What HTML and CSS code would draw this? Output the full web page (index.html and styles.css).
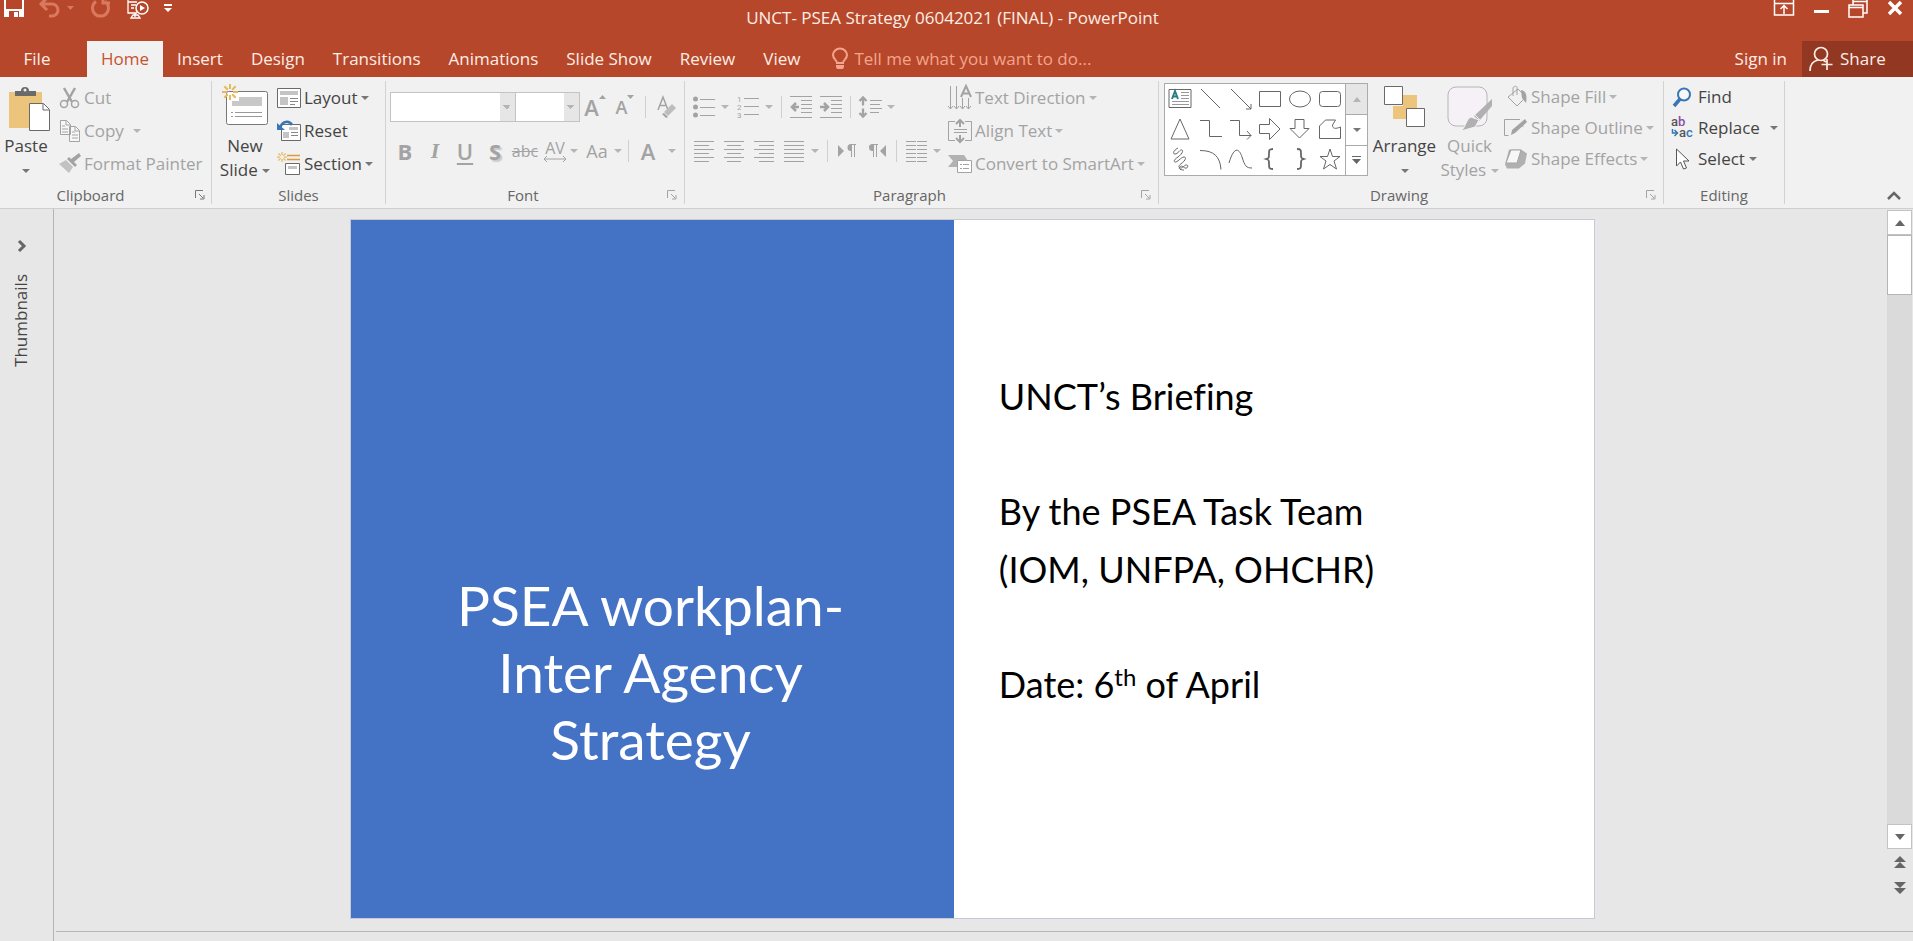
FILE: index.html
```html
<!DOCTYPE html>
<html lang="en">
<head>
<meta charset="utf-8">
<title>UNCT- PSEA Strategy 06042021 (FINAL) - PowerPoint</title>
<link rel="stylesheet" href="styles.css">
</head>
<body>
<svg class="defs" aria-hidden="true">
  <symbol id="launch" viewBox="0 0 10 10"><path d="M.5 8V.5H8M4 4l4 4M9 5v4H5" fill="none" stroke="currentColor"/></symbol>
  <symbol id="star8" viewBox="0 0 16 16"><path d="M8 0v5M8 11v5M0 8h5M11 8h5M2.300 2.300l3.500 3.500M10.200 10.200l3.500 3.500M13.700 2.300l-3.500 3.500M5.800 10.200l-3.500 3.500" stroke="#e8b95c" stroke-width="2" fill="none"/></symbol>
</svg>
<header class="chrome">
  <div class="titlebar">
    <div class="quick">
      <button aria-label="Save"><svg width="20" height="18" viewBox="0 0 20 18"><path d="M1 0v16h18V0" fill="none" stroke="#fff" stroke-width="2"/><path d="M0 9h20v8H0z" fill="#fff"/><path d="M5 11h10v6H5z" fill="#b7472a"/><path d="M10 12h4v5h-4z" fill="#fff"/><path d="M4 0h12v7H4z" fill="#b7472a"/></svg></button>
      <button aria-label="Undo" class="faded wide"><svg width="36" height="18" viewBox="0 0 36 18"><path d="M8-2L2 4l6 6M2 4h11a6 6 0 0 1 0 12h-3" fill="none" stroke="currentColor" stroke-width="3"/><path d="M28 6h7l-3.500 4z" fill="currentColor"/></svg></button>
      <button aria-label="Redo" class="faded"><svg width="22" height="18" viewBox="0 0 22 18"><path d="M6 1.500a8 8 0 1 0 9 0M13-3v6h7" fill="none" stroke="currentColor" stroke-width="3"/></svg></button>
      <button aria-label="Start from beginning"><svg width="22" height="20" viewBox="0 0 22 20"><path d="M1 0v13h9M1 2h9M4 5h5M4 8h3M8 13v4M4 18h9l-2-3H6z" fill="none" stroke="#fff" stroke-width="1.300"/><circle cx="15" cy="8" r="6" fill="#b7472a" stroke="#fff" stroke-width="1.500"/><path d="M13 5l5 3-5 3z" fill="#fff"/></svg></button>
      <button aria-label="Customize toolbar" class="narrow"><svg width="8" height="8" viewBox="0 0 8 8"><path d="M0 0h8v2H0zM0 4h8L4 8z" fill="#fff"/></svg></button>
    </div>
    <h1 class="doc-title">UNCT- PSEA Strategy 06042021 (FINAL) - PowerPoint</h1>
    <div class="window-controls">
      <button aria-label="Ribbon display options"><svg width="20" height="16" viewBox="0 0 20 16"><path d="M.5 0v15h19V0M0 3.500h20M10 14V6M6.500 9L10 5.500 13.500 9" fill="none" stroke="#fff" stroke-width="1.500"/></svg></button>
      <button aria-label="Minimize"><svg width="16" height="16" viewBox="0 0 16 16"><path d="M1 10h15v3H1z" fill="#fff"/></svg></button>
      <button aria-label="Restore"><svg width="20" height="18" viewBox="0 0 20 18"><path d="M5 5V0M19 0v13h-4M5 1.500h14" fill="none" stroke="#fff" stroke-width="1.500"/><path d="M1 5h14v12H1zM1 7.500h14" fill="none" stroke="#fff" stroke-width="1.500"/></svg></button>
      <button aria-label="Close"><svg width="16" height="16" viewBox="0 0 16 16"><path d="M2 2l12 12M14 2L2 14" stroke="#fff" stroke-width="3.500"/></svg></button>
    </div>
  </div>
  <div class="tabbar">
    <nav class="tabs" aria-label="Ribbon tabs">
      <button class="tab file">File</button>
      <button class="tab active">Home</button>
      <button class="tab">Insert</button>
      <button class="tab">Design</button>
      <button class="tab">Transitions</button>
      <button class="tab">Animations</button>
      <button class="tab">Slide Show</button>
      <button class="tab">Review</button>
      <button class="tab">View</button>
    </nav>
    <label class="tell">
      <svg width="16" height="22" viewBox="0 0 16 22"><path d="M5 15c0-3-4-4-4-8a7 6.500 0 0 1 14 0c0 4-4 5-4 8z" fill="none" stroke="currentColor" stroke-width="2"/><path d="M4 17h8v2l-1 2H5l-1-2z" fill="currentColor"/></svg>
      <input type="text" aria-label="Tell me what you want to do" placeholder="Tell me what you want to do...">
    </label>
    <a class="signin" href="#">Sign in</a>
    <button class="share"><svg width="24" height="26" viewBox="0 0 24 26"><circle cx="12" cy="8" r="6.500"/><path d="M1 25c0-6 3-10 8-11M14 14l3 2M18 13v11M12.500 18.500h11"/></svg>Share</button>
  </div>
</header>

<section class="ribbon" aria-label="Home">
  <div class="group clipboard">
    <div class="content">
      <button class="big paste"><span class="art"><svg width="42" height="46" viewBox="0 0 42 46"><path d="M1 6h33v36H1z" fill="#ecc47c"/><path d="M7 10V5h6a4 4 0 0 1 8 0h7v5z" fill="#6a6a6a"/><circle cx="17" cy="4" r="1.500" fill="#f0f0f0"/><path d="M21.500 17.500h14l6 6v21h-20z" fill="#fff" stroke="#6a6a6a"/><path d="M35 18v6h6" fill="none" stroke="#6a6a6a"/></svg></span><span class="line">Paste</span><span class="line"><i class="caret"></i></span></button>
      <div class="stack">
        <button class="row off"><svg width="22" height="22" viewBox="0 0 22 22" fill="none" stroke="currentColor"><path d="M5 1l8 14M16 1L8 15" stroke-width="2.500"/><circle cx="5" cy="17" r="3.500" stroke-width="1.500"/><circle cx="16" cy="17" r="3.500" stroke-width="1.500"/></svg>Cut</button>
        <button class="row off"><svg width="22" height="22" viewBox="0 0 22 22" fill="#f7f7f7" stroke="currentColor"><path d="M1.500.5h6l4 4v10h-10zM10.500 6.500h6l4 4v11h-10z"/><path d="M16 7v4h4M7 1v4h4M3 6h3M3 9h6M3 12h6M13 12h3M13 15h6M13 18h6"/></svg>Copy<i class="caret far"></i></button>
        <button class="row off"><svg width="22" height="22" viewBox="0 0 22 22" fill="currentColor"><path d="M20 0l2 3-7 6-3-3zM10 4l8 8-2 2-8-8z"/><path d="M7 7l7 7-4 6L0 11z" opacity=".6"/></svg>Format Painter</button>
      </div>
    </div>
    <footer><span>Clipboard</span><button class="launch" aria-label="Clipboard settings"><svg width="10" height="10"><use href="#launch"/></svg></button></footer>
  </div>

  <div class="group slides">
    <div class="content">
      <button class="big"><span class="art"><svg width="48" height="42" viewBox="0 0 48 42"><rect x="5.500" y="7.500" width="41" height="33" rx="2" fill="#fff" stroke="#777"/><path d="M11 13h30v9H11z" fill="#c8c8c8"/><path d="M10 28.500h2M14 28.500h27M10 32.500h2M14 32.500h27" stroke="#999"/><path d="M11 13h7v4h-7z" fill="#fff"/><use href="#star8" x="1" y="0" width="16" height="16"/></svg></span><span class="line">New</span><span class="line">Slide <i class="caret"></i></span></button>
      <div class="stack">
        <button class="row"><svg width="24" height="20" viewBox="0 0 24 20"><path d="M.5.5h23v19H.5z" fill="#fff" stroke="#6a6a6a"/><path d="M3 3h18v4H3zM3 9h8v8H3z" fill="#c4c4c4"/><path d="M13 10.500h8M13 13.500h8M13 16.500h5" stroke="#888"/></svg>Layout<i class="caret"></i></button>
        <button class="row"><svg width="24" height="20" viewBox="0 0 24 20"><path d="M4.500 3.500h19v16h-19z" fill="#fff" stroke="#6a6a6a"/><path d="M12 6h9v3h-9zM6 11h6v6H6z" fill="#c4c4c4"/><path d="M14 11.500h7M14 14.500h7" stroke="#888"/><path d="M3 7C5 0 12-1 15 4" fill="none" stroke="#3a76b5" stroke-width="2.500"/><path d="M0 2v7h8z" fill="#3a76b5"/></svg>Reset</button>
        <button class="row"><svg width="24" height="24" viewBox="0 0 24 24"><use href="#star8" width="10" height="10"/><path d="M10 3.500h13M10 7.500h13" stroke="#dc9b3f" stroke-width="1.500"/><path d="M8.500 11.500h14v11h-14z" fill="#fff" stroke="#6a6a6a"/><path d="M11 14h9v3h-9z" fill="#c4c4c4"/></svg>Section<i class="caret"></i></button>
      </div>
    </div>
    <footer><span>Slides</span></footer>
  </div>

  <div class="group font">
    <div class="content tools">
      <div class="toolrow">
        <select class="combo family" aria-label="Font" disabled><option></option></select>
        <select class="combo size" aria-label="Font size" disabled><option></option></select>
        <button class="tool t22 semi" aria-label="Increase font size">A<svg class="mark" width="7" height="4"><path d="M0 4h7L3.500 0z" fill="currentColor"/></svg></button>
        <button class="tool t18 semi" aria-label="Decrease font size">A<svg class="mark" width="7" height="4"><path d="M0 0h7L3.500 4z" fill="currentColor"/></svg></button>
        <i class="sep wide"></i>
        <button class="tool" aria-label="Clear formatting"><svg width="20" height="22" viewBox="0 0 20 22"><path d="M1 14L6 1l5 13M3 9.500h6" fill="none" stroke="currentColor" stroke-width="1.500"/><path d="M15 8l4 4-8 8-4-4z" fill="#bdbdbd"/><path d="M7 17l4 4-2 1-4-4z" fill="currentColor"/></svg></button>
      </div>
      <div class="toolrow">
        <button class="tool t22 bold">B</button>
        <button class="tool t22 italic">I</button>
        <button class="tool t22 under">U</button>
        <button class="tool t22 bold shadow">S</button>
        <button class="tool t16 strike">abc</button>
        <button class="tool t16 spacing" aria-label="Character spacing"><span>AV</span><svg width="22" height="6" viewBox="0 0 22 6"><path d="M0 3h22M3 0L0 3l3 3M19 0l3 3-3 3" fill="none" stroke="currentColor"/></svg></button>
        <i class="caret"></i>
        <button class="tool t18 case">Aa</button>
        <i class="caret"></i>
        <i class="sep"></i>
        <button class="tool t22 semi">A</button>
        <i class="caret gap"></i>
      </div>
    </div>
    <footer><span>Font</span><button class="launch off" aria-label="Font settings"><svg width="10" height="10"><use href="#launch"/></svg></button></footer>
  </div>

  <div class="group paragraph">
    <div class="content">
      <div class="tools">
        <div class="toolrow">
          <button class="tool" aria-label="Bullets"><svg width="22" height="22" viewBox="0 0 22 22"><g fill="currentColor"><circle cx="2.500" cy="3" r="2.500"/><circle cx="2.500" cy="11" r="2.500"/><circle cx="2.500" cy="19" r="2.500"/></g><path d="M7 3.500h15M7 11.500h15M7 19.500h15" stroke="currentColor"/></svg></button><i class="caret"></i>
          <button class="tool" aria-label="Numbering"><svg width="22" height="24" viewBox="0 0 22 24" class="nums"><text x="0" y="7">1</text><text x="0" y="15">2</text><text x="0" y="23">3</text><path d="M7 3.500h15M7 11.500h15M7 19.500h15" stroke="currentColor"/></svg></button><i class="caret"></i>
          <i class="sep"></i>
          <button class="tool" aria-label="Decrease indent"><svg width="22" height="22" viewBox="0 0 22 22"><path d="M0 .5h22M11 4.500h11M11 8.500h11M11 12.500h11M11 16.500h11M0 21.500h22" stroke="currentColor"/><path d="M9 11H2M6 7l-4 4 4 4" fill="none" stroke="currentColor" stroke-width="2.500"/></svg></button>
          <button class="tool" aria-label="Increase indent"><svg width="22" height="22" viewBox="0 0 22 22"><path d="M0 .5h22M11 4.500h11M11 8.500h11M11 12.500h11M11 16.500h11M0 21.500h22" stroke="currentColor"/><path d="M0 11h7M4 7l4 4-4 4" fill="none" stroke="currentColor" stroke-width="2.500"/></svg></button>
          <i class="sep"></i>
          <button class="tool" aria-label="Line spacing"><svg width="23" height="22" viewBox="0 0 23 22"><path d="M4 1v20M.5 5L4 1.500 7.500 5M.5 17L4 20.500 7.500 17" fill="none" stroke="currentColor" stroke-width="2.300"/><path d="M1 11h6" stroke="#f0f0f0" stroke-width="3"/><path d="M11 4.500h12M11 8.500h10M11 12.500h12M11 16.500h9" stroke="currentColor"/></svg></button><i class="caret"></i>
        </div>
        <div class="toolrow">
          <button class="tool" aria-label="Align left"><svg width="20" height="21"><path d="M0 .5h20M0 4.500h15M0 8.500h20M0 12.500h15M0 16.500h20M0 20.500h15" stroke="currentColor"/></svg></button>
          <button class="tool" aria-label="Center"><svg width="20" height="21"><path d="M0 .5h20M3 4.500h14M0 8.500h20M3 12.500h14M0 16.500h20M3 20.500h14" stroke="currentColor"/></svg></button>
          <button class="tool" aria-label="Align right"><svg width="20" height="21"><path d="M0 .5h20M5 4.500h15M0 8.500h20M5 12.500h15M0 16.500h20M5 20.500h15" stroke="currentColor"/></svg></button>
          <button class="tool" aria-label="Justify"><svg width="20" height="21"><path d="M0 .5h20M0 4.500h20M0 8.500h20M0 12.500h20M0 16.500h20M0 20.500h20" stroke="currentColor"/></svg></button><i class="caret"></i>
          <i class="sep"></i>
          <button class="tool" aria-label="Left to right"><svg width="18" height="14" viewBox="0 0 18 14"><path d="M0 1l6 6-6 6zM12 0h6v1h-1v12h-1V1h-2v12h-1V7a3.500 3.500 0 0 1 0-7z" fill="currentColor"/></svg></button>
          <button class="tool" aria-label="Right to left"><svg width="18" height="14" viewBox="0 0 18 14"><path d="M18 1l-6 6 6 6zM4 0h6v1H9v12H8V1H6v12H5V7a3.500 3.500 0 0 1-1-7z" fill="currentColor"/></svg></button>
          <i class="sep"></i>
          <button class="tool" aria-label="Columns"><svg width="21" height="21"><path d="M0 .5h10M0 4.500h10M0 8.500h10M0 12.500h10M0 16.500h10M0 20.500h10M11 .5h10M11 4.500h10M11 8.500h10M11 12.500h10M11 16.500h10M11 20.500h10" stroke="currentColor"/></svg></button><i class="caret"></i>
        </div>
      </div>
      <div class="stack tight">
        <button class="row off"><svg width="24" height="24" viewBox="0 0 24 24" fill="none" stroke="currentColor"><path d="M2.500 0v23M8.500 0v23M14.500 12v11M20.500 12v11M0 20l2.500 3L5 20M6 20l2.500 3 2.500-3M12 20l2.500 3 2.500-3M18 20l2.500 3 2.500-3"/><path d="M13 11l5-11 5 11M15 7.500h6" stroke-width="2"/></svg>Text Direction<i class="caret"></i></button>
        <button class="row off"><svg width="24" height="24" viewBox="0 0 24 24" fill="none" stroke="currentColor"><path d="M7 2.500H.5v19H7M17 2.500h6.500v19H17M6 10.500h13M6 13.500h13"/><path d="M12 1v7M12 23v-7M8 5l4-4 4 4M8 19l4 4 4-4" stroke-width="2"/></svg>Align Text<i class="caret"></i></button>
        <button class="row off"><svg width="24" height="20" viewBox="0 0 24 20"><path d="M0 1h16l4 6h-8v6H0l5-6z" fill="currentColor" opacity=".8"/><path d="M9.500 6.500h14v12h-14z" fill="#fff" stroke="currentColor"/><path d="M12 10.500h2M15 10.500h6M12 14.500h2M15 14.500h6" stroke="currentColor"/></svg>Convert to SmartArt<i class="caret"></i></button>
      </div>
    </div>
    <footer><span>Paragraph</span><button class="launch off" aria-label="Paragraph settings"><svg width="10" height="10"><use href="#launch"/></svg></button></footer>
  </div>

  <div class="group drawing">
    <div class="content">
      <div class="gallery">
        <div class="shapes">
          <button aria-label="Text box"><svg viewBox="0 0 24 24"><path d="M1 2.500h22v18H1z"/><path d="M13 5.500h8M13 8.500h8M13 11.500h8M4 14.500h17M4 17.500h17" stroke="#999"/><path d="M4 12l3-8 3 8M5 9.500h4" stroke="#2a7f86" stroke-width="2"/></svg></button>
          <button aria-label="Line"><svg viewBox="0 0 24 24"><path d="M3 2l19 19"/></svg></button>
          <button aria-label="Arrow line"><svg viewBox="0 0 24 24"><path d="M3 2l20 20M23 17v5h-5"/></svg></button>
          <button aria-label="Rectangle"><svg viewBox="0 0 24 24"><path d="M1.500 4.500h21v15h-21z"/></svg></button>
          <button aria-label="Oval"><svg viewBox="0 0 24 24"><ellipse cx="12" cy="12" rx="10.500" ry="8"/></svg></button>
          <button aria-label="Rounded rectangle"><svg viewBox="0 0 24 24"><rect x="1.500" y="4.500" width="21" height="15" rx="3"/></svg></button>
          <button aria-label="Triangle"><svg viewBox="0 0 24 24"><path d="M12 2l9 20H3z"/></svg></button>
          <button aria-label="Elbow connector"><svg viewBox="0 0 24 24"><path d="M2 3.500h9.500v16H24"/></svg></button>
          <button aria-label="Elbow arrow"><svg viewBox="0 0 24 24"><path d="M2 3.500h9.500v15H23M19 14l4 4.500-4 4"/></svg></button>
          <button aria-label="Right arrow"><svg viewBox="0 0 24 24"><path d="M1.500 7.500h10v-6L22 12 11.500 22.500v-6h-10z"/></svg></button>
          <button aria-label="Down arrow"><svg viewBox="0 0 24 24"><path d="M7 2.500h9v9h5L11.500 21 2 11.500h5z"/></svg></button>
          <button aria-label="Freeform"><svg viewBox="0 0 24 24"><path d="M1.500 9l6-6h10l-3 5c0 4 3 4 8 2v11.500h-21z"/></svg></button>
          <button aria-label="Scribble"><svg viewBox="0 0 24 24"><path d="M10 1C6 3 4 7 7 7s5-5 7-4-1 5-4 7-5 4-3 5 6-5 9-5 1 4-2 6-4 4-2 5 5-4 7-3 0 4-2 3-3-3-5-1 1 3 4 3"/></svg></button>
          <button aria-label="Arc"><svg viewBox="0 0 24 24"><path d="M2 3.500c14 0 20 6 21 19"/></svg></button>
          <button aria-label="Curve"><svg viewBox="0 0 24 24"><path d="M1 16C6-1 11 1 14 10s4 11 10 11"/></svg></button>
          <button aria-label="Left brace"><svg viewBox="0 0 24 24"><path d="M15 2c-4 0-4 1-4 5s0 4-3 5c3 1 3 1 3 5s0 5 4 5" stroke-width="1.800"/></svg></button>
          <button aria-label="Right brace"><svg viewBox="0 0 24 24"><path d="M9 2c4 0 4 1 4 5s0 4 3 5c-3 1-3 1-3 5s0 5-4 5" stroke-width="1.800"/></svg></button>
          <button aria-label="Star"><svg viewBox="0 0 24 24"><path d="M12 2l2.500 7.500H22l-6 4.500 2.500 8L12 17.500 5.500 22 8 14 2 9.500h7.500z"/></svg></button>
        </div>
        <div class="steps">
          <button class="dim" aria-label="Previous shapes"><svg width="8" height="5"><path d="M0 5h8L4 0z" fill="#b5b5b5"/></svg></button>
          <button aria-label="Next shapes"><i class="caret"></i></button>
          <button aria-label="More shapes"><svg width="9" height="8"><path d="M0 0h9v1H0zM0 3h9L4.500 8z" fill="#666"/></svg></button>
        </div>
      </div>
      <button class="big arrange"><span class="art"><svg width="42" height="42" viewBox="0 0 42 42"><path d="M19 9h14v13H19zM9 20h13v13H9z" fill="#ecc47c"/><path d="M.5.5h18v18H.5zM22.500 22.500h18v18h-18z" fill="#fff" stroke="#6a6a6a"/></svg></span><span class="line">Arrange</span><span class="line"><i class="caret"></i></span></button>
      <button class="big styles off"><span class="art"><svg width="46" height="46" viewBox="0 0 46 46"><rect x="1" y="1" width="39" height="39" rx="8" fill="#f5f1f6" stroke="#b5b5b5"/><path d="M45 13v7L32 35l-5-5z" fill="#b0b0b0"/><path d="M28 29l6 6M24 31l8 3-4 7-14 4c5-4 5-12 10-14z" fill="#b0b0b0" stroke="#f5f1f6"/></svg></span><span class="line">Quick</span><span class="line">Styles <i class="caret"></i></span></button>
      <div class="stack three">
        <button class="row off"><svg width="24" height="22" viewBox="0 0 24 22" fill="none" stroke="currentColor"><path d="M4 11L14 3l8 8-9 9zM9 10V2c1-3 5-2 4 1v6"/><path d="M17 4c6 1 6 7 5 13l-4-5z" fill="currentColor" stroke="none"/></svg>Shape Fill<i class="caret"></i></button>
        <button class="row off"><svg width="24" height="20" viewBox="0 0 24 20"><path d="M16 1.500H.5v16h4M19 9v-1" fill="none" stroke="currentColor"/><path d="M21 1l2 3L11 15l-4 2 1-5z" fill="currentColor"/></svg>Shape Outline<i class="caret"></i></button>
        <button class="row off"><svg width="24" height="22" viewBox="0 0 24 22"><path d="M5 1.500h12l6 4-2 10-6 5H3l-2-4z" fill="#b0b0b0"/><path d="M7 2h10l-4 13H2z" fill="#f7f7f7" stroke="#a5a5a5"/></svg>Shape Effects<i class="caret"></i></button>
      </div>
    </div>
    <footer><span>Drawing</span><button class="launch off" aria-label="Drawing settings"><svg width="10" height="10"><use href="#launch"/></svg></button></footer>
  </div>

  <div class="group editing">
    <div class="content">
      <div class="stack three">
        <button class="row"><svg width="24" height="20" viewBox="0 0 24 20"><circle cx="14" cy="7.500" r="6" fill="#f8f8f8" stroke="#3a76b5" stroke-width="2"/><path d="M10 12l-6 7" stroke="#3a76b5" stroke-width="3.500"/></svg>Find</button>
        <button class="row"><svg class="swap" width="24" height="22" viewBox="0 0 24 22"><text x="1" y="9">a<tspan fill="#8a4fa3">b</tspan></text><text x="9" y="20">a<tspan fill="#3a76b5">c</tspan></text><path d="M2.500 12v4h4M4.500 13l3 3-3 3" fill="none" stroke="#3a76b5" stroke-width="1.500"/></svg>Replace<i class="caret far"></i></button>
        <button class="row"><svg width="24" height="22" viewBox="0 0 24 22"><path d="M6.500 1v17l4-4 3 7 3-1-3-7h5.500z" fill="#fff" stroke="#555"/></svg>Select<i class="caret"></i></button>
      </div>
    </div>
    <footer><span>Editing</span></footer>
  </div>
  <button class="collapse" aria-label="Collapse the ribbon"><svg width="14" height="9" viewBox="0 0 14 9"><path d="M1 8l6-6 6 6" fill="none" stroke="#666" stroke-width="2.500"/></svg></button>
</section>

<main class="workspace">
  <aside class="thumbs">
    <button aria-label="Expand thumbnails"><svg width="8" height="12" viewBox="0 0 8 12"><path d="M1 1l5 5-5 5" fill="none" stroke="#666" stroke-width="3"/></svg></button>
    <span>Thumbnails</span>
  </aside>
  <div class="editor">
    <div class="stage">
      <article class="slide">
        <div class="slide-title"><h2>PSEA workplan-<br>Inter Agency<br>Strategy</h2></div>
        <div class="slide-body">
          <p>UNCT’s Briefing</p>
          <p>By the PSEA Task Team<br>(IOM, UNFPA, OHCHR)</p>
          <p>Date: 6<sup>th</sup> of April</p>
        </div>
      </article>
    </div>
    <div class="scroll">
      <button class="box" aria-label="Scroll up"><svg width="10" height="6"><path d="M0 6h10L5 0z" fill="#666"/></svg></button>
      <div class="track"><div class="thumb"></div></div>
      <button class="box" aria-label="Scroll down"><svg width="10" height="6"><path d="M0 0h10L5 6z" fill="#666"/></svg></button>
      <button class="jump" aria-label="Previous slide"><svg width="12" height="12"><path d="M0 6h12L6 0zM0 12h12L6 6z" fill="#666"/></svg></button>
      <button class="jump" aria-label="Next slide"><svg width="12" height="12"><path d="M0 0h12L6 6zM0 6h12l-6 6z" fill="#666"/></svg></button>
    </div>
  </div>
</main>
</body>
</html>
```

FILE: styles.css
```css
* { box-sizing: border-box; }

body {
  margin: 0;
  height: 100vh;
  display: flex;
  flex-direction: column;
  overflow: hidden;
  font: 17px/24px "Open Sans", sans-serif;
  color: #444;
  background: #e7e7e7;
}

button, input, select { font: inherit; color: inherit; }
button { padding: 0; border: 0; background: none; }
svg { flex: none; overflow: visible; }
.defs { position: absolute; width: 0; height: 0; }

/* Title bar */
.chrome { background: #b7472a; color: #fdeee6; }
.titlebar {
  height: 41px;
  display: grid;
  grid-template-columns: 1fr auto 1fr;
}
.quick { display: flex; align-items: flex-start; padding-left: 4px; gap: 15px; }
.quick button { display: flex; }
.quick .faded { color: #d9795f; }
.quick .narrow { padding-top: 4px; }
.doc-title {
  margin: 0;
  padding: 6px 8px 0 0;
  font-size: 17px;
  line-height: 24px;
  font-weight: 400;
}
.window-controls { display: flex; justify-content: flex-end; align-items: flex-start; }
.window-controls button { width: 37px; display: flex; justify-content: center; }

/* Tabs */
.tabbar { display: flex; height: 36px; align-items: stretch; }
.tabs { display: flex; }
.tab { padding: 0 14px; }
.tab.file { width: 74px; margin-right: 13px; }
.tab.active { background: #f1f1f1; color: #c8512f; }
.tell { display: flex; align-items: center; gap: 6px; flex: 1; margin-left: 18px; color: #f2a58c; }
.tell input { flex: 1; border: 0; padding: 0; background: none; outline: 0; }
.tell input::placeholder { color: #f2a58c; opacity: 1; }
.signin { align-self: center; margin-right: 15px; color: inherit; text-decoration: none; }
.share { width: 111px; display: flex; align-items: center; gap: 7px; padding-left: 7px; background: #923822; }
.share svg { fill: none; stroke: #fdeee6; stroke-width: 1.7; }

/* Ribbon */
.ribbon {
  display: flex;
  padding: 4px 0;
  background: #f1f1f1;
  border-bottom: 1px solid #cfcfcf;
}
.group { display: flex; flex-direction: column; border-right: 1px solid #d2d2d2; }
.content { display: flex; height: 105px; }
.group footer {
  display: flex;
  align-items: center;
  height: 18px;
  font-size: 15px;
  line-height: 18px;
  color: #666;
}
.group footer span { flex: 1; text-align: center; }
.launch { width: 24px; padding-left: 7px; display: flex; color: #777; }
.off, .tools { color: #a3a3a3; }
.clipboard { width: 212px; }
.clipboard footer span { padding-right: 10px; }
.clipboard .launch { width: 20px; padding-left: 4px; }
.slides { width: 174px; padding-left: 6px; }
.slides footer { padding-right: 6px; }
.font { width: 299px; }
.paragraph { width: 474px; }
.drawing { width: 505px; }
.editing { width: 121px; }
.editing .content { padding-left: 6px; }

.caret {
  width: 0;
  height: 0;
  display: inline-block;
  vertical-align: middle;
  border: 4px solid transparent;
  border-top-color: #777;
  border-bottom: 0;
}
.off .caret, .tools .caret { border-top-color: #b5b5b5; }

.big { display: flex; flex-direction: column; align-items: center; }
.big .art { height: 53px; display: flex; padding-top: 5px; }
.big .line { height: 24px; white-space: nowrap; }
.paste { width: 52px; }
.paste .art { padding-left: 6px; }
.slides .big { width: 54px; }
.slides .art { padding-top: 3px; }
.arrange { width: 73px; }
.styles { width: 57px; }

.stack { display: flex; flex-direction: column; align-items: flex-start; }
.row { height: 33px; display: flex; align-items: center; gap: 4px; white-space: nowrap; }
.three .row { height: 31px; }
.row .far { margin-left: 6px; }
.clipboard .stack { padding-left: 7px; }
.clipboard .row { gap: 3px; }
.slides .stack { padding-left: 5px; }
.slides .row { gap: 3px; }

/* Compact tool rows */
.tools { display: flex; flex-direction: column; padding-left: 4px; }
.toolrow { display: flex; align-items: center; height: 36px; }
.toolrow:first-child { height: 52px; }
.toolrow > .caret { margin: 0 4px 0 2px; }
.sep { width: 1px; height: 22px; margin: 0 4px; background: #cfcfcf; }
.sep.wide { margin: 0 6px 0 5px; }
.tool { width: 30px; display: flex; justify-content: center; align-items: center; }
.t22 { font-size: 22px; }
.t18 { font-size: 18px; }
.t16 { font-size: 16px; }
.mark { align-self: flex-start; }
.semi { font-weight: 600; }
.bold { font-weight: 700; }
.italic { font-family: "Liberation Serif", serif; font-style: italic; font-weight: 700; }
.under { text-decoration: underline; text-underline-offset: 3px; font-weight: 600; }
.shadow { text-shadow: 2px 2px 1px #ccc; }
.strike { text-decoration: line-through; }
.spacing { flex-direction: column; }
.spacing span { line-height: 16px; }
.font .toolrow > .caret { margin: 0 2px 0 0; }
.font .toolrow > .gap { margin-left: 5px; }
.font .case { width: 34px; }
.combo {
  appearance: none;
  height: 30px;
  border: 1px solid #c3c3c3;
  border-radius: 0;
  opacity: 1;
  background:
    linear-gradient(45deg, transparent 50%, #b5b5b5 50%) right 8px center / 4px 4px no-repeat,
    linear-gradient(-45deg, transparent 50%, #b5b5b5 50%) right 4px center / 4px 4px no-repeat,
    linear-gradient(to left, #e6e6e6 15px, #fff 15px);
}
.family { width: 126px; }
.size { width: 65px; margin-left: -1px; }
.nums text { font: 8px Roboto, sans-serif; fill: currentColor; }
.paragraph .content { justify-content: space-between; }
.paragraph .stack { width: 210px; }
.tight .row { gap: 3px; }

/* Shape gallery */
.drawing .content { padding-left: 5px; }
.gallery { display: flex; height: 93px; margin-top: 2px; border: 1px solid #ababab; background: #fff; }
.shapes { display: grid; grid-template-columns: repeat(6, 30px); grid-template-rows: repeat(3, 30px); }
.shapes button { display: grid; place-items: center; }
.shapes svg { width: 24px; height: 24px; fill: none; stroke: #666; }
.steps { width: 22px; display: grid; grid-template-rows: repeat(3, 1fr); border-left: 1px solid #ababab; }
.steps button { display: grid; place-items: center; }
.steps button + button { border-top: 1px solid #ababab; }
.steps .dim { background: #e6e6e6; }
.swap text { font: 500 13px Roboto, sans-serif; fill: #555; }
.drawing .three { padding-left: 6px; }
.drawing .row { gap: 3px; }
.collapse { margin-left: auto; align-self: flex-end; padding: 0 12px 4px; display: flex; }

/* Workspace */
.workspace { flex: 1; display: flex; min-height: 0; }
.thumbs {
  width: 54px;
  display: flex;
  flex-direction: column;
  align-items: flex-start;
  gap: 22px;
  padding: 31px 0 0 9px;
  border-right: 1px solid #b5b5b5;
}
.thumbs button { display: flex; padding-left: 9px; }
.thumbs span { writing-mode: vertical-rl; transform: rotate(180deg); }
.editor { flex: 1; display: flex; min-width: 0; margin: 0 0 9px 2px; border-bottom: 1px solid #b5b5b5; }
.stage { flex: 1; display: flex; justify-content: center; padding: 10px 0 12px 2px; }
.slide { height: 100%; aspect-ratio: 16 / 9; display: flex; background: #fff; border: 1px solid #c5cbd6; }
.slide-title {
  width: 48.5%;
  display: flex;
  flex-direction: column;
  justify-content: flex-end;
  padding: 0 4px 145px 0;
  background: #4472c4;
  color: #fff;
  text-align: center;
}
.slide-title h2 { margin: 0; font: 400 55px/67px Lato, sans-serif; }
.slide-body {
  flex: 1;
  padding: 147px 0 0 45px;
  color: #000;
  font: 36px/58px Lato, sans-serif;
  font-variant-ligatures: none;
}
.slide-body p { margin: 0 0 57px; }
.slide-body sup { font-size: 24px; line-height: 0; vertical-align: 12px; }

.scroll { width: 26px; display: flex; flex-direction: column; padding: 1px 1px 0 0; }
.box { height: 25px; border: 1px solid #c3c3c3; background: #fff; display: grid; place-items: center; }
.track { flex: 1; background: #dadada; }
.thumb { height: 60px; border: 1px solid #b5b5b5; background: #fff; }
.jump { height: 26px; display: grid; place-items: center; }
.jump:last-child { margin-bottom: 30px; }
```
